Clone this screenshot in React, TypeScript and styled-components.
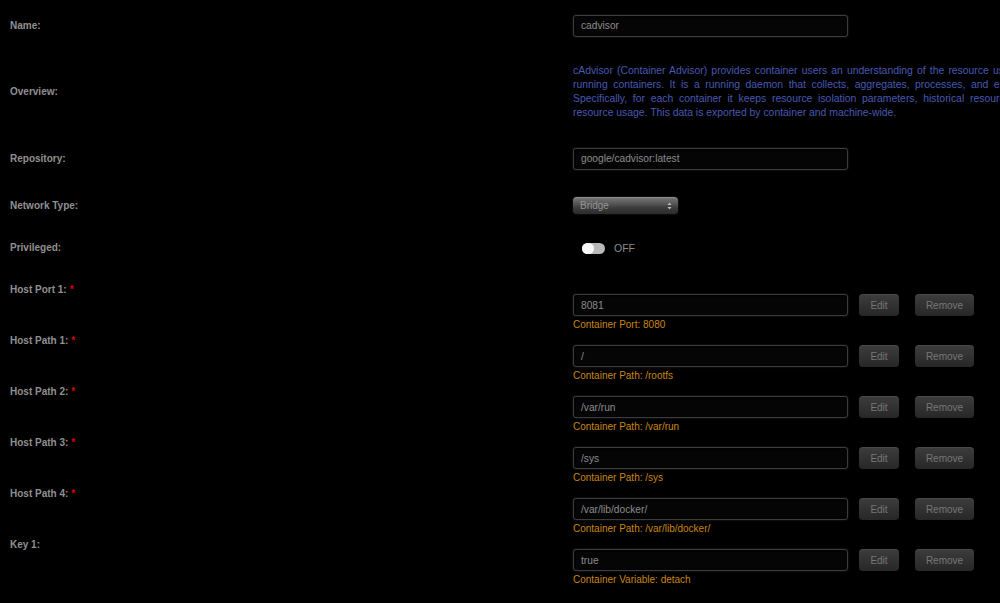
import React from 'react';
import styled, { createGlobalStyle } from 'styled-components';

const GlobalStyle = createGlobalStyle`
  html, body {
    margin: 0;
    padding: 0;
    background: #000;
    overflow: hidden;
  }
  body {
    font-family: 'Liberation Sans', Arial, sans-serif;
  }
`;

const Form = styled.div`
  width: 1300px;
  padding-top: 3px;
  background: #000;
`;

const Row = styled.div<{ $h: number; $top?: boolean }>`
  display: grid;
  grid-template-columns: 573px auto;
  align-items: ${({ $top }) => ($top ? 'start' : 'center')};
  height: ${({ $h }) => $h}px;
`;

const Spacer = styled.div`
  height: 17px;
`;

const Label = styled.div<{ $pad?: number }>`
  padding: ${({ $pad }) => $pad || 0}px 0 0 10px;
  font-size: 10px;
  line-height: 12px;
  font-weight: 700;
  color: #909090;
`;

const Required = styled.span`
  color: #d00;
  margin-left: 3px;
`;

const Control = styled.div<{ $pad?: number }>`
  padding-top: ${({ $pad }) => $pad || 0}px;
`;

const Input = styled.div`
  box-sizing: border-box;
  width: 275px;
  height: 22px;
  padding: 0 7px;
  display: flex;
  align-items: center;
  font-size: 10.2px;
  color: #8c8c8c;
  background: #050505;
  border: 1px solid #3c3c3c;
  border-radius: 3px;
  box-shadow: 0 0 2px rgba(120, 120, 120, 0.35), inset 0 1px 2px rgba(0, 0, 0, 0.9);
`;

const Overview = styled.p`
  margin: 0;
  width: 640px;
  font-size: 10.4px;
  line-height: 14px;
  color: #4858b2;
  text-align: justify;
`;

const Select = styled.div`
  box-sizing: border-box;
  width: 105px;
  height: 17px;
  padding: 0 6px 0 7px;
  display: flex;
  align-items: center;
  justify-content: space-between;
  font-size: 10px;
  color: #969696;
  border-radius: 4px;
  background: linear-gradient(#787878 0%, #5a5a5a 35%, #3a3a3a 65%, #2c2c2c 100%);
  box-shadow: inset 0 1px 0 rgba(255, 255, 255, 0.18), 0 0 2px rgba(90, 90, 90, 0.5);
`;

const SwitchRow = styled.div`
  display: flex;
  align-items: center;
  gap: 9px;
  padding-left: 9px;
  font-size: 10.5px;
  color: #8a8a8a;
`;

const Track = styled.div`
  width: 23px;
  height: 11px;
  border-radius: 6px;
  background: #b9b9b9;
  display: flex;
  align-items: center;
`;

const Knob = styled.div`
  width: 12px;
  height: 11px;
  border-radius: 6px;
  background: #fafafa;
`;

const FieldLine = styled.div`
  display: flex;
  align-items: center;
`;

const Button = styled.div<{ $w: number; $ml: number }>`
  box-sizing: border-box;
  width: ${({ $w }) => $w}px;
  height: 22px;
  margin-left: ${({ $ml }) => $ml}px;
  display: flex;
  align-items: center;
  justify-content: center;
  font-size: 10px;
  color: #777;
  border-radius: 4px;
  background: linear-gradient(#3d3d3d, #272727);
  box-shadow: inset 0 1px 0 rgba(255, 255, 255, 0.07), 0 0 1px #111;
`;

const Caption = styled.div`
  margin-top: 2px;
  font-size: 10px;
  line-height: 13px;
  color: #c98610;
`;

const SelectArrows = () => (
  <svg width="5" height="8" viewBox="0 0 5 8">
    <path d="M2.5 0.5 L4.5 3 H0.5 Z" fill="#bbb" />
    <path d="M2.5 7.5 L4.5 5 H0.5 Z" fill="#bbb" />
  </svg>
);

type Mapping = { label: string; value: string; caption: string; required: boolean };

const mappings: Mapping[] = [
  { label: 'Host Port 1:', value: '8081', caption: 'Container Port: 8080', required: true },
  { label: 'Host Path 1:', value: '/', caption: 'Container Path: /rootfs', required: true },
  { label: 'Host Path 2:', value: '/var/run', caption: 'Container Path: /var/run', required: true },
  { label: 'Host Path 3:', value: '/sys', caption: 'Container Path: /sys', required: true },
  { label: 'Host Path 4:', value: '/var/lib/docker/', caption: 'Container Path: /var/lib/docker/', required: true },
  { label: 'Key 1:', value: 'true', caption: 'Container Variable: detach', required: false },
];

const overview =
  'cAdvisor (Container Advisor) provides container users an understanding of the resource usage and performance characteristics of their running containers. It is a running daemon that collects, aggregates, processes, and exports information about running containers. Specifically, for each container it keeps resource isolation parameters, historical resource usage, histograms of complete historical resource usage. This data is exported by container and machine-wide.';

export default function App() {
  return (
    <>
      <GlobalStyle />
      <Form>
        <Row $h={45}>
          <Label>Name:</Label>
          <Control>
            <Input>cadvisor</Input>
          </Control>
        </Row>
        <Row $h={88}>
          <Label>Overview:</Label>
          <Control>
            <Overview>{overview}</Overview>
          </Control>
        </Row>
        <Row $h={45}>
          <Label>Repository:</Label>
          <Control>
            <Input>google/cadvisor:latest</Input>
          </Control>
        </Row>
        <Row $h={49}>
          <Label>Network Type:</Label>
          <Control>
            <Select>
              <span>Bridge</span>
              <SelectArrows />
            </Select>
          </Control>
        </Row>
        <Row $h={36}>
          <Label>Privileged:</Label>
          <Control>
            <SwitchRow>
              <Track>
                <Knob />
              </Track>
              <span>OFF</span>
            </SwitchRow>
          </Control>
        </Row>
        <Spacer />
        {mappings.map((m) => (
          <Row $h={51} $top key={m.label}>
            <Label $pad={1}>
              {m.label}
              {m.required && <Required>*</Required>}
            </Label>
            <Control $pad={11}>
              <FieldLine>
                <Input>{m.value}</Input>
                <Button $w={40} $ml={11}>Edit</Button>
                <Button $w={59} $ml={16}>Remove</Button>
              </FieldLine>
              <Caption>{m.caption}</Caption>
            </Control>
          </Row>
        ))}
      </Form>
    </>
  );
}
